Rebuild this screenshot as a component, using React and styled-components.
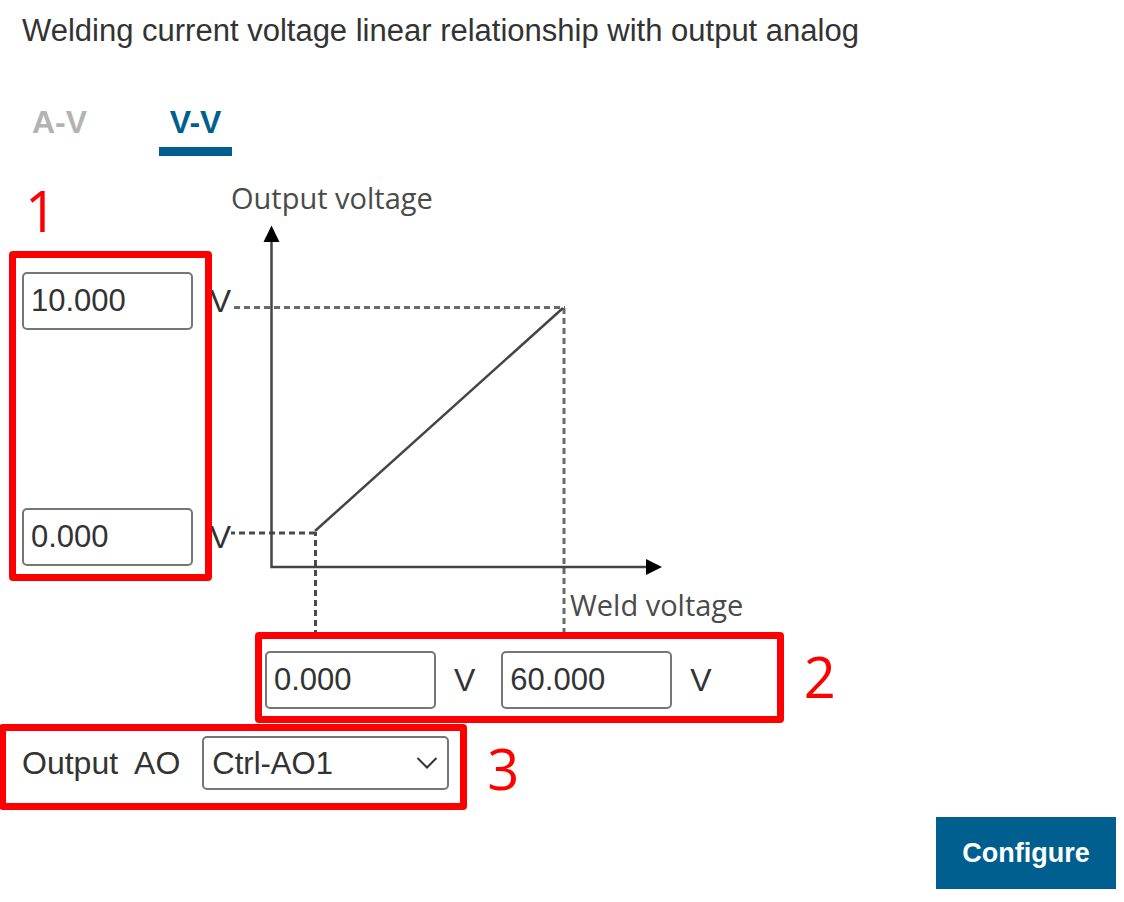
import React, { useState } from 'react';
import styled, { createGlobalStyle } from 'styled-components';

const GlobalStyle = createGlobalStyle`
  *, *::before, *::after { box-sizing: border-box; }
  body {
    margin: 0;
    background: #ffffff;
    color: #333333;
    font-family: "Liberation Sans", Arial, sans-serif;
    font-size: 32px;
    line-height: 36px;
  }
`;

const BLUE = '#005f8f';
const RED = '#ff0000';

const Page = styled.main`
  display: flex;
  flex-direction: column;
  padding: 13px 8px 12px 0;
`;

const Title = styled.h1`
  margin: 0 0 55px 22px;
  font-size: 31px;
  font-weight: 400;
`;

const Tabs = styled.div`
  display: flex;
  gap: 62px;
  padding-left: 22px;
`;

const Tab = styled.button`
  min-width: 73px;
  padding: 0 10px 7px;
  border: 0;
  border-bottom: 9px solid ${(p) => (p.$active ? BLUE : 'transparent')};
  background: none;
  color: ${(p) => (p.$active ? BLUE : '#b3b3b3')};
  font: inherit;
  font-weight: 700;
  cursor: pointer;
`;

const ChartArea = styled.section`
  display: flex;
  align-items: flex-start;
  padding-left: 9px;
`;

const OutputSide = styled.div`
  display: grid;
  grid-template-columns: 203px 19px;
  grid-template-rows: 95px 330px;
`;

const Marker = styled.span`
  color: ${RED};
  font-family: "Open Sans", "Noto Sans", sans-serif;
  font-size: 56px;
  font-weight: 500;
  line-height: 60px;
`;

const TopMarker = styled(Marker)`
  grid-column: 1 / -1;
  padding: 24px 0 0 16px;
`;

const RowMarker = styled(Marker)`
  padding-top: 14px;
`;

const Frame = styled.div`
  border: 7px solid ${RED};
  border-radius: 4px;
`;

const OutputFrame = styled(Frame)`
  position: relative;
  z-index: 1;
  display: flex;
  flex-direction: column;
  justify-content: space-between;
  padding: 14px 12px 8px 6px;
`;

const Units = styled.div`
  display: flex;
  flex-direction: column;
  justify-content: space-between;
  align-items: flex-end;
  padding: 21px 0 15px;
`;

const Unit = styled.span`
  line-height: 58px;
`;

const NumberInput = styled.input`
  width: 171px;
  height: 58px;
  padding: 0 7px 1px;
  border: 2px solid #767676;
  border-radius: 5px;
  background: #ffffff;
  color: inherit;
  font: inherit;
  font-size: 31px;
`;

const Chart = styled.svg`
  display: block;
  flex: none;
  width: 514px;
  height: 476px;
`;

const ChartText = styled.text`
  fill: #4a4a4a;
  font-family: "Open Sans", "Noto Sans", sans-serif;
  font-size: 29px;
`;

const InputRow = styled.div`
  display: flex;
  align-items: flex-start;
  gap: 20px;
  padding-left: 255px;
`;

const WeldFrame = styled(Frame)`
  display: flex;
  gap: 26px;
  padding: 12px 65px 7px 3px;
`;

const Field = styled.div`
  display: flex;
  gap: 18px;
`;

const OutputRow = styled.div`
  display: flex;
  align-items: flex-start;
  gap: 20px;
  margin: 1px 0 7px -1px;
`;

const SelectFrame = styled(Frame)`
  display: flex;
  gap: 22px;
  padding: 5px 11px 13px 16px;
`;

const Label = styled.label`
  line-height: 54px;
  white-space: pre;
`;

const SelectBox = styled.div`
  display: grid;
  align-items: center;
  width: 247px;

  > * { grid-area: 1 / 1; }
`;

const Select = styled.select`
  width: 100%;
  height: 54px;
  padding: 2px 40px 0 8px;
  border: 2px solid #767676;
  border-radius: 5px;
  appearance: none;
  background: #ffffff;
  color: inherit;
  font: inherit;
  font-size: 31px;
`;

const Chevron = styled.svg`
  justify-self: end;
  width: 24px;
  height: 14px;
  margin-right: 10px;
  pointer-events: none;
`;

const ConfigureButton = styled.button`
  align-self: flex-end;
  width: 180px;
  height: 72px;
  border: 0;
  background: ${BLUE};
  color: #ffffff;
  font: inherit;
  font-size: 27px;
  font-weight: 700;
  cursor: pointer;
`;

function RelationChart() {
  return (
    <Chart viewBox="0 0 514 476" role="img" aria-label="Output voltage against weld voltage">
      <ChartText x="0" y="53">Output voltage</ChartText>
      <ChartText x="339" y="460">Weld voltage</ChartText>
      <g fill="none" stroke="#6a6a6a" strokeWidth="3" strokeDasharray="6 4">
        <path d="M3 151.5H334" />
        <path d="M333 152V476" />
      </g>
      <g fill="none" stroke="#4a4a4a" strokeWidth="3" strokeDasharray="6 4">
        <path d="M0 377H84" strokeDashoffset="2" />
        <path d="M84.500 376V476" strokeDashoffset="2" />
      </g>
      <g fill="none" stroke="#444444" strokeWidth="2.500">
        <path d="M40.500 84V411H416" />
        <path d="M84 375L332 152" />
      </g>
      <path d="M40.500 69.500L48.500 86H32.500Z" fill="#000000" />
      <path d="M431 411L415 403V419Z" fill="#000000" />
    </Chart>
  );
}

export default function App() {
  const [tab, setTab] = useState('V-V');
  return (
    <>
      <GlobalStyle />
      <Page>
        <Title>Welding current voltage linear relationship with output analog</Title>
        <Tabs role="tablist">
          {['A-V', 'V-V'].map((name) => (
            <Tab
              key={name}
              role="tab"
              aria-selected={tab === name}
              $active={tab === name}
              onClick={() => setTab(name)}
            >
              {name}
            </Tab>
          ))}
        </Tabs>
        <ChartArea>
          <OutputSide>
            <TopMarker>1</TopMarker>
            <OutputFrame>
              <NumberInput aria-label="Maximum output voltage" defaultValue="10.000" />
              <NumberInput aria-label="Minimum output voltage" defaultValue="0.000" />
            </OutputFrame>
            <Units>
              <Unit>V</Unit>
              <Unit>V</Unit>
            </Units>
          </OutputSide>
          <RelationChart />
        </ChartArea>
        <InputRow>
          <WeldFrame>
            <Field>
              <NumberInput aria-label="Minimum weld voltage" defaultValue="0.000" />
              <Unit>V</Unit>
            </Field>
            <Field>
              <NumberInput aria-label="Maximum weld voltage" defaultValue="60.000" />
              <Unit>V</Unit>
            </Field>
          </WeldFrame>
          <RowMarker>2</RowMarker>
        </InputRow>
        <OutputRow>
          <SelectFrame>
            <Label htmlFor="output-ao">{'Output  AO'}</Label>
            <SelectBox>
              <Select id="output-ao" defaultValue="Ctrl-AO1">
                <option>Ctrl-AO1</option>
              </Select>
              <Chevron viewBox="0 0 24 14" aria-hidden="true">
                <path d="M2.500 2L12 11.500L21.500 2" fill="none" stroke="#333333" strokeWidth="2" />
              </Chevron>
            </SelectBox>
          </SelectFrame>
          <RowMarker>3</RowMarker>
        </OutputRow>
        <ConfigureButton>Configure</ConfigureButton>
      </Page>
    </>
  );
}
